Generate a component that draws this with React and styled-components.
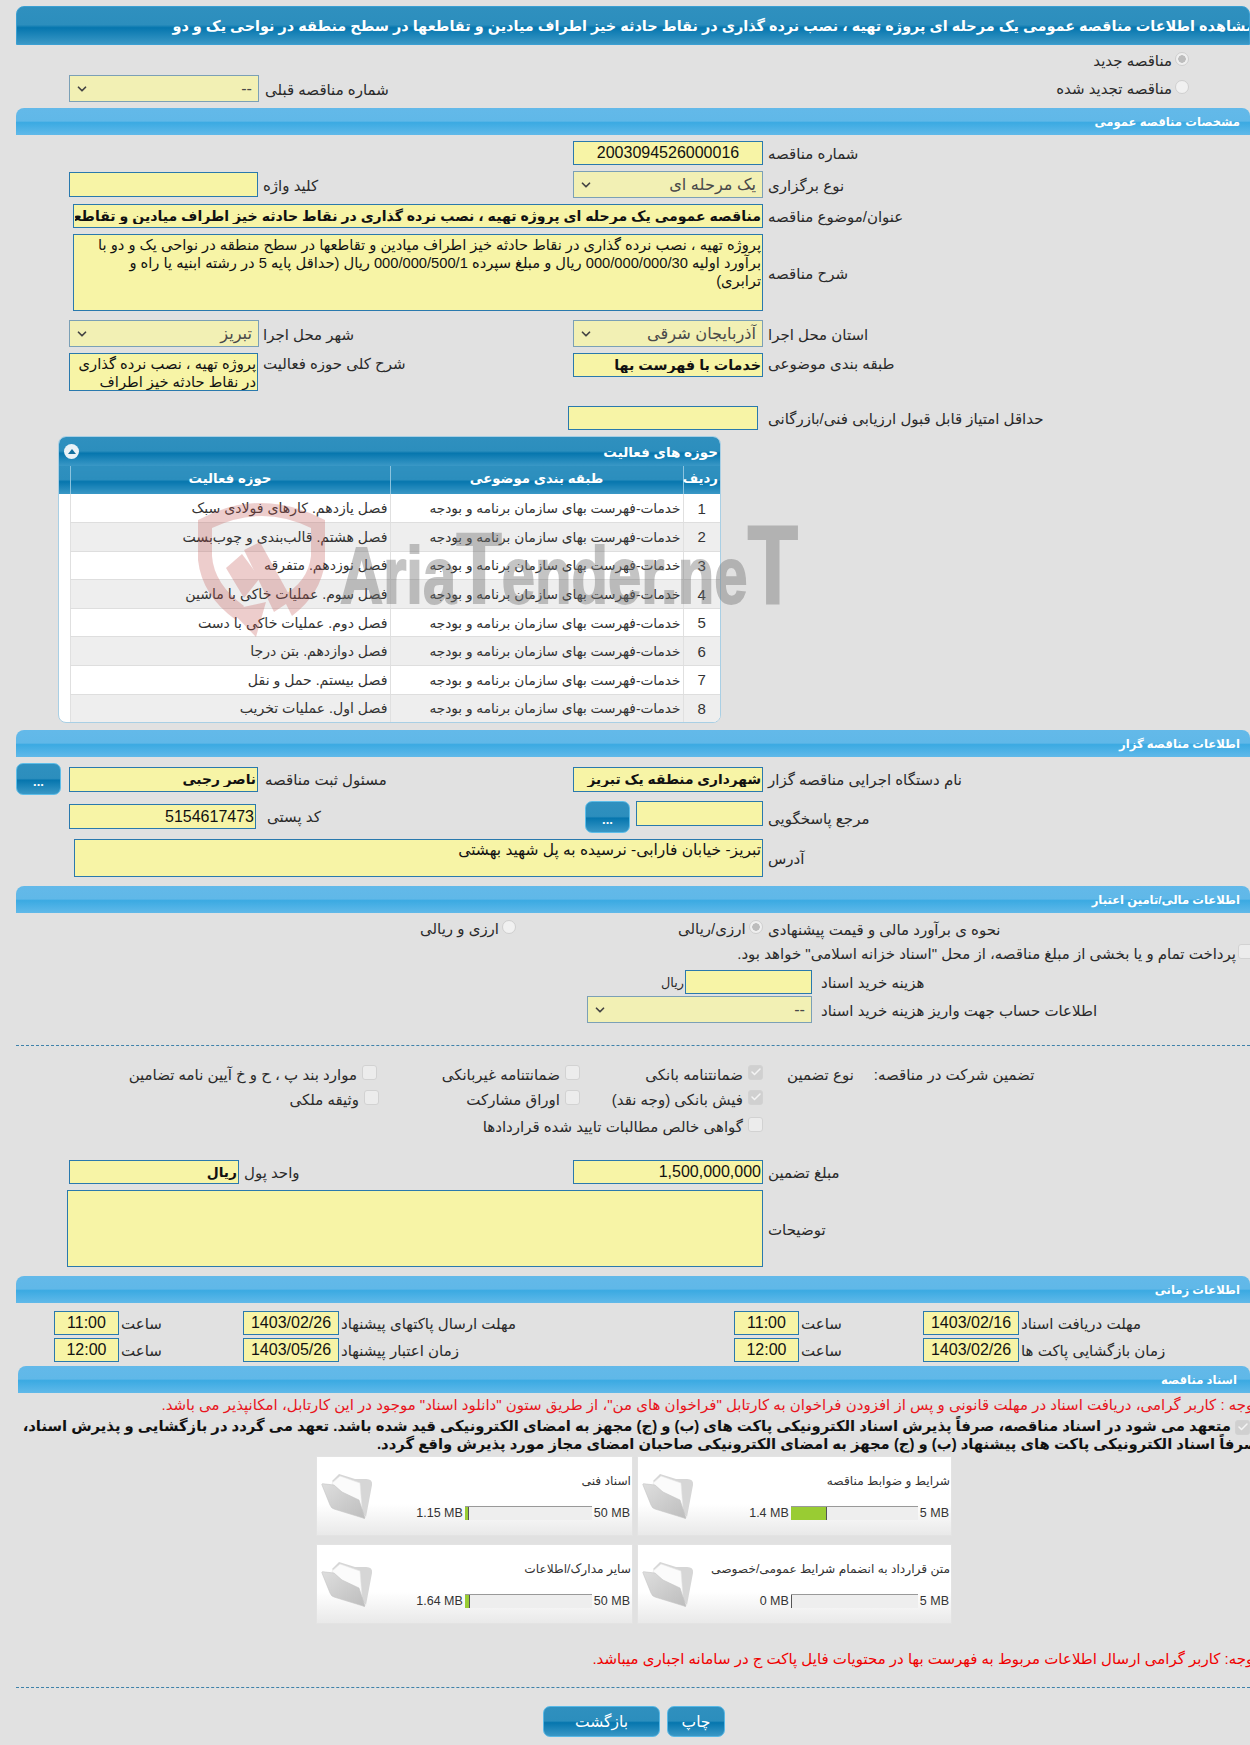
import React from 'react';
import styled, { createGlobalStyle } from 'styled-components';
import { ChevronDown, Check } from 'lucide-react';

const GlobalStyle = createGlobalStyle`
  html, body {
    margin: 0;
    padding: 0;
    background: #e1e1e1;
    overflow: hidden;
  }
  body {
    font-family: "Liberation Sans", "DejaVu Sans", sans-serif;
    font-size: 15px;
    color: #2a2a2a;
  }
`;

const Page = styled.div`
  position: relative;
  width: 1250px;
  height: 1745px;
  padding-top: 6px;
  box-sizing: border-box;
  overflow: hidden;
`;

const TitleBar = styled.div`
  display: flex;
  justify-content: flex-end;
  align-items: center;
  height: 39px;
  margin-left: 16px;
  box-sizing: border-box;
  border: 1px solid #3b9fd2;
  border-radius: 8px 8px 0 0;
  background: linear-gradient(#2f90bf 0%, #2c8ebd 48%, #0676ae 56%, #3a98c6 100%);
  overflow: hidden;
  white-space: nowrap;
`;

const TitleText = styled.span`
  flex: none;
  margin-right: -6px;
  color: #fff;
  font-size: 14.45px;
  font-weight: bold;
  direction: rtl;
`;

const SectionBar = styled.div`
  display: flex;
  justify-content: flex-end;
  align-items: center;
  height: 27px;
  margin-top: ${p => p.$mt || 0}px;
  margin-left: ${p => p.$ml || 16}px;
  padding-right: ${p => p.$pr || 10}px;
  box-sizing: border-box;
  border-radius: 8px 8px 0 0;
  background: linear-gradient(#63b9e9 0%, #60b8e8 48%, #3baae2 54%, #60b9e9 100%);
  color: #fff;
  font-size: 11.6px;
  font-weight: bold;
  direction: ltr;
`;

const Row = styled.div`
  display: flex;
  align-items: ${p => p.$align || 'center'};
  height: ${p => p.$h}px;
  margin-top: ${p => p.$mt || 0}px;
  padding-left: ${p => p.$pl || 69}px;
  box-sizing: border-box;
`;

const Slot = styled.div`
  display: flex;
  align-items: ${p => p.$align || 'center'};
  flex: none;
  width: ${p => p.$w}px;
`;

const Label = styled.span`
  flex: none;
  margin-left: ${p => p.$ml || 5}px;
  margin-top: ${p => p.$mt || 0}px;
  padding-top: 2px;
  direction: rtl;
  white-space: nowrap;
  line-height: 22px;
`;

const TopBlock = styled.div`
  display: flex;
  justify-content: space-between;
  height: 63px;
  padding: 5px 61px 0 69px;
  box-sizing: border-box;
`;

const PrevNumber = styled.div`
  display: flex;
  align-items: center;
  margin-top: 25px;
  height: 27px;
`;

const RadioStack = styled.div`
  display: flex;
  flex-direction: column;
  align-items: flex-end;
  gap: 6px;
`;

const ChoiceLine = styled.div`
  display: flex;
  align-items: center;
  justify-content: flex-end;
  gap: ${p => p.$gap || 3}px;
  height: 22px;
  white-space: nowrap;
`;

const ChoiceText = styled.span`
  direction: rtl;
`;

const UnitText = styled.span`
  direction: rtl;
  font-size: 12.8px;
  white-space: nowrap;
`;

const Radio = styled.span`
  display: inline-block;
  position: relative;
  top: -2px;
  flex: none;
  width: 14px;
  height: 14px;
  box-sizing: border-box;
  border: 1px solid #cfcfcf;
  border-radius: 50%;
  background: ${p => (p.$on ? 'radial-gradient(#bdbdbd 0 3.5px, #efefef 4px)' : '#f1f1f1')};
`;

const Tick = styled.span`
  display: inline-flex;
  align-items: center;
  justify-content: center;
  position: relative;
  top: -3px;
  flex: none;
  width: 15px;
  height: 15px;
  margin-right: ${p => p.$mr || 0}px;
  box-sizing: border-box;
  border: 1px solid #d2d2d2;
  border-radius: 3px;
  background: ${p => (p.$on ? '#d0d0d0' : '#ececec')};
  color: #f4f4f4;
`;

const baseField = `
  display: block;
  flex: none;
  box-sizing: border-box;
  margin: 0;
  padding: 0 1px;
  border: 1px solid #2a79ad;
  border-radius: 0;
  background: #f7f4a6;
  color: #111;
  font-family: "Liberation Sans", "DejaVu Sans", sans-serif;
  direction: rtl;
  outline: none;
`;

const Input = styled.input`
  ${baseField}
  width: ${p => p.$w}px;
  height: ${p => p.$h || 24}px;
  margin-top: ${p => p.$mt || 0}px;
  font-size: ${p => p.$fs || (p.$num ? 16 : 13.8)}px;
  font-weight: ${p => (p.$bold ? 'bold' : 'normal')};
  direction: ${p => (p.$ltr ? 'ltr' : 'rtl')};
  text-align: ${p => (p.$center ? 'center' : 'right')};
`;

const TextArea = styled.textarea`
  ${baseField}
  width: ${p => p.$w}px;
  height: ${p => p.$h}px;
  padding-top: 1px;
  font-size: ${p => p.$fs || 14.7}px;
  line-height: 18px;
  white-space: pre;
  overflow: hidden;
  resize: none;
`;

const SelectBox = styled.div`
  display: flex;
  align-items: center;
  justify-content: space-between;
  flex: none;
  width: ${p => p.$w}px;
  height: 27px;
  padding: 0 6px 0 5px;
  box-sizing: border-box;
  border: 1px solid #7ba0b6;
  background: #f2f0b4;
  color: #4a4a4a;
  font-size: 16.2px;
  direction: ltr;
`;

const SelectValue = styled.span`
  direction: rtl;
`;

const DotsButton = styled.div`
  display: flex;
  align-items: flex-end;
  justify-content: center;
  flex: none;
  width: 45px;
  height: 32px;
  margin-right: ${p => p.$mr || 0}px;
  padding-bottom: 7px;
  box-sizing: border-box;
  border: 1px solid #5dbde8;
  border-radius: 7px;
  background: linear-gradient(#2f90bf 0%, #2c8ebd 48%, #0676ae 54%, #3a98c6 100%);
  color: #fff;
  font-size: 13px;
  font-weight: bold;
  line-height: 10px;
`;

const Panel = styled.div`
  width: 663px;
  height: 287px;
  margin: 6px 0 0 58px;
  box-sizing: border-box;
  border: 1px solid #a9cfe4;
  border-radius: 8px;
  background: #fff;
  overflow: hidden;
`;

const PanelHead = styled.div`
  display: flex;
  align-items: center;
  justify-content: space-between;
  height: 29px;
  padding: 0 2px 0 5px;
  background: linear-gradient(#2f90bf 0%, #2c8ebd 48%, #0676ae 56%, #3a98c6 100%);
  color: #fff;
  font-size: 13.5px;
  font-weight: bold;
`;

const PanelTitle = styled.span`
  direction: rtl;
`;

const CollapseDot = styled.span`
  display: flex;
  align-items: center;
  justify-content: center;
  width: 15px;
  height: 15px;
  border-radius: 50%;
  background: #eaf2f7;

  &::before {
    content: '';
    border-left: 4px solid transparent;
    border-right: 4px solid transparent;
    border-bottom: 5px solid #14709f;
  }
`;

const Table = styled.table`
  width: 661px;
  border-collapse: collapse;
  table-layout: fixed;
`;

const HeadCell = styled.th`
  height: 28px;
  padding: 0 2px 3px;
  box-sizing: border-box;
  border-left: 1px solid #8cc3de;
  background: linear-gradient(#2f90bf 0%, #2c8ebd 48%, #0676ae 56%, #3a98c6 100%);
  color: #fff;
  font-size: 13.3px;
  font-weight: bold;
  direction: rtl;
  white-space: nowrap;

  &:first-child {
    border-left: 0;
  }
`;

const BodyRow = styled.tr`
  height: 28.6px;

  &:nth-child(even) td:not(:first-child) {
    background: #eeeeee;
  }
`;

const BodyCell = styled.td`
  padding: 0 2px;
  border-left: 1px solid #e0e0e0;
  border-bottom: 1px solid #dedede;
  color: #333;
  font-size: ${p => p.$fs || 14.1}px;
  text-align: ${p => (p.$center ? 'center' : 'right')};
  direction: rtl;
  white-space: nowrap;
  overflow: hidden;

  &:first-child {
    border-left: 0;
    border-bottom: 0;
  }
`;

const Watermark = styled.svg`
  position: absolute;
  left: 190px;
  top: 490px;
  pointer-events: none;
`;

const Dashed = styled.div`
  margin-top: ${p => p.$mt}px;
  margin-left: ${p => p.$ml || 16}px;
  border-top: 1px dashed #3f82aa;
  height: 0;
`;

const GuaranteeRow = styled.div`
  display: flex;
  align-items: center;
  height: 22px;
  margin-top: ${p => p.$mt || 0}px;
`;

const CheckCell = styled.div`
  display: flex;
  align-items: center;
  justify-content: flex-end;
  gap: 5px;
  flex: none;
  width: ${p => p.$w}px;
  white-space: nowrap;
`;

const GuaranteeLabel = styled.span`
  flex: none;
  margin-left: ${p => p.$ml}px;
  direction: rtl;
  white-space: nowrap;
`;

const NoteLine = styled.div`
  display: flex;
  justify-content: flex-end;
  align-items: center;
  height: ${p => p.$h || 18}px;
  margin-top: ${p => p.$mt || 0}px;
  color: ${p => p.$color || '#e8141c'};
  white-space: nowrap;
`;

const NoteText = styled.span`
  flex: none;
  margin-right: ${p => p.$mr ?? -8}px;
  direction: rtl;
`;

const Pledge = styled.div`
  margin: 3px -8px 0 0;
  direction: rtl;
  color: #111;
  font-size: 14.8px;
  font-weight: bold;
  line-height: 18px;
  white-space: nowrap;
  text-align: right;
`;

const PledgeTick = styled(Tick)`
  top: 2px;
  margin-left: 4px;
  vertical-align: baseline;
  margin-right: 8px;
`;

const CardGrid = styled.div`
  display: grid;
  grid-template-columns: 317px 315px;
  grid-auto-rows: 80px;
  gap: 8px 4px;
  margin-top: 3px;
  padding-left: 316px;
`;

const Card = styled.div`
  display: flex;
  padding: 15px 1px 0 3px;
  box-sizing: border-box;
  border: 1px solid #e3e3e3;
  background: linear-gradient(#fff 0%, #fff 60%, #e9e9e9 100%);
`;

const FolderIcon = styled.svg`
  flex: none;
  width: 56px;
  height: 50px;
  filter: blur(0.4px);
`;

const CardBody = styled.div`
  display: flex;
  flex-direction: column;
  flex: 1;
  min-width: 0;
  padding-top: 1px;
`;

const CardTitle = styled.div`
  direction: rtl;
  color: #333;
  font-size: 12.2px;
  line-height: 16px;
  white-space: nowrap;
`;

const Meter = styled.div`
  display: flex;
  align-items: center;
  justify-content: flex-end;
  gap: 2px;
  margin-top: 17px;
  padding-right: 1px;
  color: #333;
  font-size: 12.5px;
  white-space: nowrap;
`;

const MeterTrack = styled.div`
  flex: none;
  width: 127px;
  height: 14px;
  box-sizing: border-box;
  border-top: 1px solid #999;
  background: #eeeeee;
`;

const MeterFill = styled.div`
  height: 100%;
  box-sizing: content-box;
  border-right: 1px solid #555;
  background: #99cc33;
`;

const ButtonRow = styled.div`
  display: flex;
  gap: 7px;
  margin-top: 18px;
  padding-left: 543px;
`;

const ActionButton = styled.div`
  display: flex;
  align-items: center;
  justify-content: center;
  width: ${p => p.$w}px;
  height: 31px;
  box-sizing: border-box;
  border: 1px solid #58b8e6;
  border-radius: 7px;
  background: linear-gradient(#2f90bf 0%, #2c8ebd 48%, #0676ae 54%, #3a98c6 100%);
  color: #fff;
  font-size: 15.5px;
  direction: rtl;
`;

const activities = [
  'فصل یازدهم. کارهای فولادی سبک',
  'فصل هشتم. قالب‌بندی و چوب‌بست',
  'فصل نوزدهم. متفرقه',
  'فصل سوم. عملیات خاکی با ماشین',
  'فصل دوم. عملیات خاکی با دست',
  'فصل دوازدهم. بتن درجا',
  'فصل بیستم. حمل و نقل',
  'فصل اول. عملیات تخریب',
];

const docs = [
  { title: 'اسناد فنی', used: 1.15, max: 50 },
  { title: 'شرایط و ضوابط مناقصه', used: 1.4, max: 5 },
  { title: 'سایر مدارک/اطلاعات', used: 1.64, max: 50 },
  { title: 'متن قرارداد به انضمام شرایط عمومی/خصوصی', used: 0, max: 5 },
];

const timeRows = [
  ['11:00', '1403/02/26', 'مهلت ارسال پاکتهای پیشنهاد', '11:00', '1403/02/16', 'مهلت دریافت اسناد'],
  ['12:00', '1403/05/26', 'زمان اعتبار پیشنهاد', '12:00', '1403/02/26', 'زمان بازگشایی پاکت ها'],
];

const Select = ({ w, value }) => (
  <SelectBox $w={w}>
    <ChevronDown size={14} strokeWidth={3} color="#444" />
    <SelectValue>{value}</SelectValue>
  </SelectBox>
);

const Folder = () => (
  <FolderIcon viewBox="10 13 56 50">
    <defs>
      <linearGradient id="folderFront" x1="0" y1="0" x2="1" y2="1">
        <stop offset="0" stopColor="#dedede" />
        <stop offset="1" stopColor="#bdbdbd" />
      </linearGradient>
    </defs>
    <path d="M22 22 L29 15 L45 20 L54 20 Q63 19 62 26 L56 58 Z" fill="#d6d6d6" />
    <path d="M22 24 L30 17 L50 24 L52 50 L30 40 Z" fill="#fbfbfb" stroke="#e6e6e6" strokeWidth="0.6" />
    <path d="M12 26 Q11 24 15 25 L24 26 L32 33 L49 41 L55 59 Q55 60 53 59 L24 50 Q21 49 20 46 Z" fill="url(#folderFront)" stroke="#c4c4c4" strokeWidth="0.6" />
  </FolderIcon>
);

const DocCard = ({ title, used, max }) => (
  <Card>
    <Folder />
    <CardBody>
      <CardTitle>{title}</CardTitle>
      <Meter>
        <span>{used} MB</span>
        <MeterTrack>
          <MeterFill style={{ width: `${(used / max) * 100}%` }} />
        </MeterTrack>
        <span>{max} MB</span>
      </Meter>
    </CardBody>
  </Card>
);

const CheckItem = ({ w, on, children }) => (
  <CheckCell $w={w}>
    <ChoiceText>{children}</ChoiceText>
    <Tick $on={on}>{on && <Check size={12} strokeWidth={3} />}</Tick>
  </CheckCell>
);

const App = () => (
  <Page>
    <GlobalStyle />
    <TitleBar>
      <TitleText>مشاهده اطلاعات مناقصه عمومی یک مرحله ای پروژه تهیه ، نصب نرده گذاری در نقاط حادثه خیز اطراف میادین و تقاطعها در سطح منطقه در نواحی یک و دو</TitleText>
    </TitleBar>

    <TopBlock>
      <PrevNumber>
        <Select w={190} value="--" />
        <Label $ml={6}>شماره مناقصه قبلی</Label>
      </PrevNumber>
      <RadioStack>
        <ChoiceLine><ChoiceText>مناقصه جدید</ChoiceText><Radio $on /></ChoiceLine>
        <ChoiceLine><ChoiceText>مناقصه تجدید شده</ChoiceText><Radio /></ChoiceLine>
      </RadioStack>
    </TopBlock>

    <SectionBar>مشخصات مناقصه عمومی</SectionBar>

    <Row $h={24} $mt={6} $pl={573}>
      <Input $w={190} $num readOnly value="2003094526000016" $center />
      <Label>شماره مناقصه</Label>
    </Row>
    <Row $h={27} $mt={6}>
      <Slot $w={504}>
        <Input $w={189} $h={25} readOnly value="" />
        <Label>کلید واژه</Label>
      </Slot>
      <Select w={190} value="یک مرحله ای" />
      <Label>نوع برگزاری</Label>
    </Row>
    <Row $h={24} $mt={6} $pl={73}>
      <Input $w={690} $bold $fs={14.1} readOnly value="مناقصه عمومی یک مرحله ای پروژه تهیه ، نصب نرده گذاری در نقاط حادثه خیز اطراف میادین و تقاطعها در سطح منطقه در نواحی یک و دو" />
      <Label>عنوان/موضوع مناقصه</Label>
    </Row>
    <Row $h={77} $mt={6} $pl={73}>
      <TextArea
        $w={690}
        $h={77}
        readOnly
        value={'پروژه تهیه ، نصب نرده گذاری در نقاط حادثه خیز اطراف میادین و تقاطعها در سطح منطقه در نواحی یک و دو با\nبرآورد اولیه 000/000/000/30 ریال و مبلغ سپرده 000/000/500/1 ریال (حداقل پایه 5 در رشته ابنیه یا راه و\nترابری)'}
      />
      <Label>شرح مناقصه</Label>
    </Row>
    <Row $h={27} $mt={9}>
      <Slot $w={504}>
        <Select w={190} value="تبریز" />
        <Label $ml={4}>شهر محل اجرا</Label>
      </Slot>
      <Select w={190} value="آذربایجان شرقی" />
      <Label>استان محل اجرا</Label>
    </Row>
    <Row $h={38} $mt={6} $align="flex-start">
      <Slot $w={504} $align="flex-start">
        <TextArea $w={189} $h={38} readOnly value={'پروژه تهیه ، نصب نرده گذاری\nدر نقاط حادثه خیز اطراف'} />
        <Label $mt={-2}>شرح کلی حوزه فعالیت</Label>
      </Slot>
      <Input $w={190} $bold $fs={14.3} readOnly value="خدمات با فهرست بها" />
      <Label $mt={-2}>طبقه بندی موضوعی</Label>
    </Row>
    <Row $h={24} $mt={15} $pl={568}>
      <Input $w={190} readOnly value="" />
      <Label $ml={10}>حداقل امتیاز قابل قبول ارزیابی فنی/بازرگانی</Label>
    </Row>

    <Panel>
      <PanelHead>
        <CollapseDot />
        <PanelTitle>حوزه های فعالیت</PanelTitle>
      </PanelHead>
      <Table>
        <colgroup>
          <col style={{ width: 11 }} />
          <col style={{ width: 320 }} />
          <col style={{ width: 293 }} />
          <col style={{ width: 37 }} />
        </colgroup>
        <thead>
          <tr>
            <HeadCell />
            <HeadCell>حوزه فعالیت</HeadCell>
            <HeadCell>طبقه بندی موضوعی</HeadCell>
            <HeadCell>ردیف</HeadCell>
          </tr>
        </thead>
        <tbody>
          {activities.map((name, i) => (
            <BodyRow key={name}>
              <BodyCell />
              <BodyCell>{name}</BodyCell>
              <BodyCell $fs={13.7}>خدمات-فهرست بهای سازمان برنامه و بودجه</BodyCell>
              <BodyCell $center $fs={15}>{i + 1}</BodyCell>
            </BodyRow>
          ))}
        </tbody>
      </Table>
    </Panel>

    <SectionBar $mt={7}>اطلاعات مناقصه گزار</SectionBar>

    <Row $h={32} $mt={6} $pl={16}>
      <DotsButton $mr={8}>...</DotsButton>
      <Slot $w={504}>
        <Input $w={189} $h={25} $bold readOnly value="ناصر رجبی" />
        <Label $ml={7}>مسئول ثبت مناقصه</Label>
      </Slot>
      <Input $w={190} $h={25} $bold readOnly value="شهرداری منطقه یک تبریز" />
      <Label>نام دستگاه اجرایی مناقصه گزار</Label>
    </Row>
    <Row $h={32} $mt={6} $align="flex-start">
      <Slot $w={516} $align="flex-start">
        <Input $w={187} $h={25} $mt={3} $num readOnly value="5154617473" />
        <Label $ml={11} $mt={3}>کد پستی</Label>
      </Slot>
      <DotsButton $mr={6}>...</DotsButton>
      <Input $w={127} $h={25} readOnly value="" />
      <Label $mt={5}>مرجع پاسخگویی</Label>
    </Row>
    <Row $h={38} $mt={6} $pl={74}>
      <TextArea $w={689} $h={38} $fs={15.5} readOnly value="تبریز- خیابان فارابی- نرسیده به پل شهید بهشتی" />
      <Label>آدرس</Label>
    </Row>

    <SectionBar $mt={9}>اطلاعات مالی/تامین اعتبار</SectionBar>

    <Row $h={22} $mt={5} $pl={420}>
      <Slot $w={258}>
        <ChoiceLine>
          <ChoiceText>ارزی و ریالی</ChoiceText>
          <Radio />
        </ChoiceLine>
      </Slot>
      <Slot $w={83}>
        <ChoiceLine>
          <ChoiceText>ارزی/ریالی</ChoiceText>
          <Radio $on />
        </ChoiceLine>
      </Slot>
      <Label $ml={7}>نحوه ی برآورد مالی و قیمت پیشنهادی</Label>
    </Row>
    <NoteLine $h={22} $mt={3} $color="#2a2a2a">
      <ChoiceLine $gap={2}>
        <NoteText $mr={0}>پرداخت تمام و یا بخشی از مبلغ مناقصه، از محل "اسناد خزانه اسلامی" خواهد بود.</NoteText>
        <Tick $mr={-3} />
      </ChoiceLine>
    </NoteLine>
    <Row $h={24} $mt={5} $pl={661}>
      <Slot $w={24}><UnitText>ریال</UnitText></Slot>
      <Input $w={127} readOnly value="" />
      <Label $ml={9}>هزینه خرید اسناد</Label>
    </Row>
    <Row $h={27} $mt={2} $pl={587}>
      <Select w={225} value="--" />
      <Label $ml={9}>اطلاعات حساب جهت واریز هزینه خرید اسناد</Label>
    </Row>

    <Dashed $mt={22} />

    <GuaranteeRow $mt={18}>
      <CheckItem w={377}>موارد بند پ ، ح و خ آیین نامه تضامین</CheckItem>
      <CheckItem w={203}>ضمانتنامه غیربانکی</CheckItem>
      <CheckItem w={183} on>ضمانتنامه بانکی</CheckItem>
      <GuaranteeLabel $ml={24}>نوع تضمین</GuaranteeLabel>
      <GuaranteeLabel $ml={20}>تضمین شرکت در مناقصه:</GuaranteeLabel>
    </GuaranteeRow>
    <GuaranteeRow $mt={3}>
      <CheckItem w={379}>وثیقه ملکی</CheckItem>
      <CheckItem w={201}>اوراق مشارکت</CheckItem>
      <CheckItem w={183} on>فیش بانکی (وجه نقد)</CheckItem>
    </GuaranteeRow>
    <GuaranteeRow $mt={5}>
      <CheckItem w={763}>گواهی خالص مطالبات تایید شده قراردادها</CheckItem>
    </GuaranteeRow>

    <Row $h={24} $mt={22}>
      <Slot $w={504}>
        <Input $w={170} $bold readOnly value="ریال" />
        <Label>واحد پول</Label>
      </Slot>
      <Input $w={190} $num readOnly value="1,500,000,000" $ltr />
      <Label>مبلغ تضمین</Label>
    </Row>
    <Row $h={77} $mt={6} $pl={67}>
      <TextArea $w={696} $h={77} readOnly value="" />
      <Label>توضیحات</Label>
    </Row>

    <SectionBar $mt={9}>اطلاعات زمانی</SectionBar>

    {timeRows.map(([t1, d1, l1, t2, d2, l2], i) => (
      <Row key={l1} $h={24} $mt={i === 0 ? 8 : 3} $pl={54}>
        <Slot $w={189}>
          <Input $w={65} $num $center readOnly value={t1} />
          <Label $ml={2}>ساعت</Label>
        </Slot>
        <Slot $w={491}>
          <Input $w={96} $num $center readOnly value={d1} />
          <Label $ml={2}>{l1}</Label>
        </Slot>
        <Slot $w={189}>
          <Input $w={65} $num $center readOnly value={t2} />
          <Label $ml={2}>ساعت</Label>
        </Slot>
        <Input $w={96} $num $center readOnly value={d2} />
        <Label $ml={2}>{l2}</Label>
      </Row>
    ))}

    <SectionBar $mt={4} $ml={18} $pr={13}>اسناد مناقصه</SectionBar>

    <NoteLine $mt={3}>
      <NoteText>توجه : کاربر گرامی، دریافت اسناد در مهلت قانونی و پس از افزودن فراخوان به کارتابل "فراخوان های من"، از طریق ستون "دانلود اسناد" موجود در این کارتابل، امکانپذیر می باشد.</NoteText>
    </NoteLine>
    <Pledge>
      <PledgeTick $on><Check size={12} strokeWidth={3} /></PledgeTick>
      متعهد می شود در اسناد مناقصه، صرفاً پذیرش اسناد الکترونیکی پاکت های (ب) و (ج) مجهز به امضای الکترونیکی قید شده باشد. تعهد می گردد در بازگشایی و پذیرش اسناد،
      <br />
      صرفاً اسناد الکترونیکی پاکت های پیشنهاد (ب) و (ج) مجهز به امضای الکترونیکی صاحبان امضای مجاز مورد پذیرش واقع گردد.
    </Pledge>

    <CardGrid>
      {docs.map(doc => (
        <DocCard key={doc.title} {...doc} />
      ))}
    </CardGrid>

    <NoteLine $mt={26} $color="#f00000">
      <NoteText>توجه: کاربر گرامی ارسال اطلاعات مربوط به فهرست بها در محتویات فایل پاکت ج در سامانه اجباری میباشد.</NoteText>
    </NoteLine>

    <Dashed $mt={19} />

    <ButtonRow>
      <ActionButton $w={117}>بازگشت</ActionButton>
      <ActionButton $w={58}>چاپ</ActionButton>
    </ButtonRow>

    <Watermark width="620" height="160" viewBox="0 0 620 160">
      <g fill="#c0504d" opacity="0.28">
        <path d="M8 30 Q70 -4 135 30 L135 72 Q131 104 102 126 L92 106 Q118 92 121 66 L121 38 Q72 14 22 38 L22 66 Q24 94 54 116 L46 130 Q12 106 8 70 Z" />
        <path d="M36 78 L52 64 L70 88 L54 108 Z" />
        <path d="M54 60 L70 52 L102 110 L84 122 Z" />
        <path d="M40 120 L76 112 L66 147 Z" />
      </g>
      <text
        x="150"
        y="113"
        fill="#6e6e6e"
        stroke="#6e6e6e"
        strokeWidth="2"
        opacity="0.4"
        fontFamily="Liberation Sans, sans-serif"
        fontWeight="bold"
        fontSize="80"
        textLength="458"
        lengthAdjust="spacingAndGlyphs"
      >
        Aria<tspan fontSize="100">T</tspan>ender.ne<tspan fontSize="111">T</tspan>
      </text>
    </Watermark>
  </Page>
);

export default App;
